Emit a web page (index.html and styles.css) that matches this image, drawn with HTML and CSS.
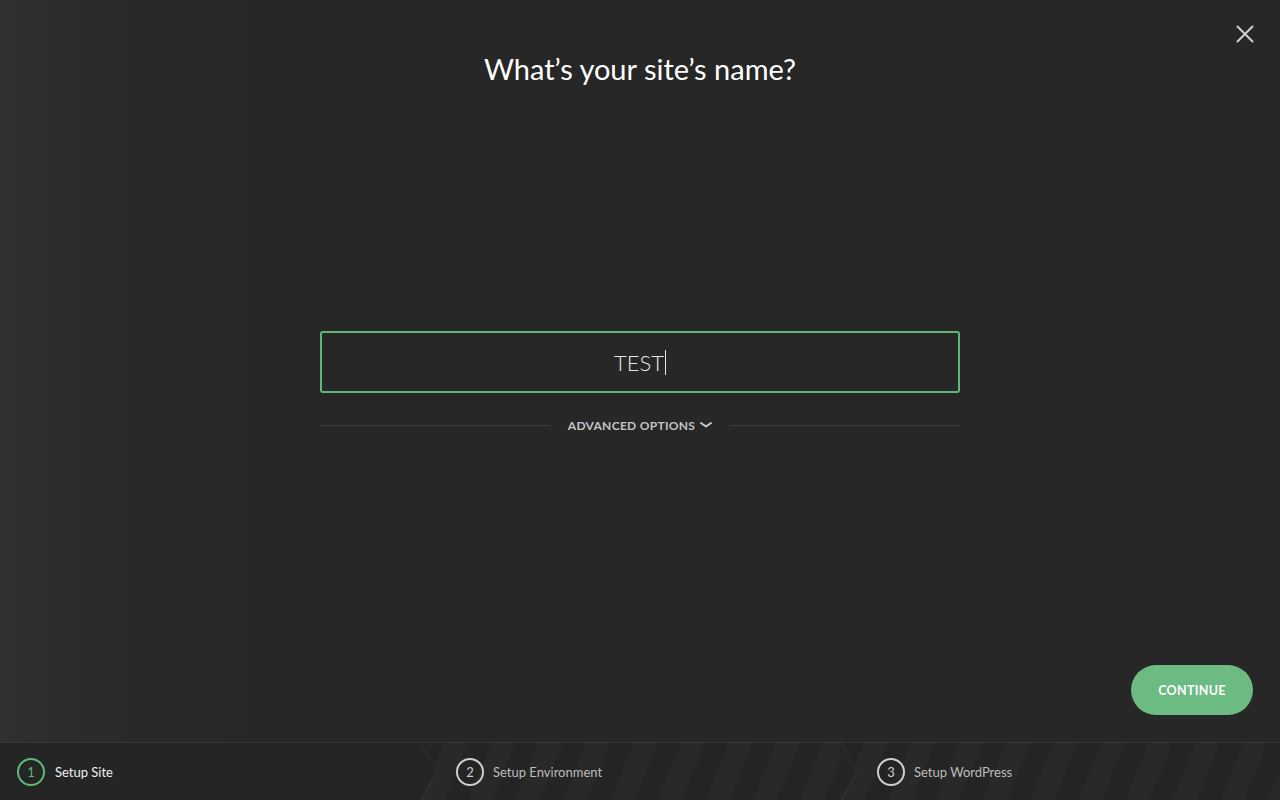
FILE: index.html
```
<!DOCTYPE html>
<html lang="en">
<head>
<meta charset="utf-8">
<title>Create a new site</title>
<link rel="stylesheet" href="styles.css">
</head>
<body>
<div class="screen">
  <header class="topbar">
    <div></div>
    <h1 class="title">What’s your site’s name?</h1>
    <button class="close" aria-label="Close">
      <svg width="18" height="18" viewBox="0 0 18 18"><path d="M1.5 1.5L16.5 16.5M16.5 1.5L1.5 16.5" stroke="#cfcfcf" stroke-width="2" stroke-linecap="round"/></svg>
    </button>
  </header>

  <section class="form">
    <div class="field">
      <span class="value">TEST</span><span class="caret"></span>
    </div>
    <div class="advanced">
      <span class="rule"></span>
      <span class="adv-label">ADVANCED OPTIONS
        <svg width="12" height="8" viewBox="0 0 12 8"><path d="M1 2L6 5.5L11 2" fill="none" stroke="#c8c8c8" stroke-width="2" stroke-linecap="round" stroke-linejoin="round"/></svg>
      </span>
      <span class="rule"></span>
    </div>
  </section>

  <div class="actions">
    <button class="continue">CONTINUE</button>
  </div>
</div>

<footer class="steps">
  <div class="step active">
    <span class="num">1</span><span class="label">Setup Site</span>
  </div>
  <div class="step pending">
    <svg class="chev" width="18" height="58" viewBox="0 0 18 58"><path d="M0.5 0L17 29L0.5 58" fill="none" stroke="#3a3a3a" stroke-width="1"/></svg>
    <span class="num">2</span><span class="label">Setup Environment</span>
  </div>
  <div class="step pending last">
    <svg class="chev" width="18" height="58" viewBox="0 0 18 58"><path d="M0.5 0L17 29L0.5 58" fill="none" stroke="#3a3a3a" stroke-width="1"/></svg>
    <span class="num">3</span><span class="label">Setup WordPress</span>
  </div>
</footer>
</body>
</html>
```

FILE: styles.css
```
* { box-sizing: border-box; }

html, body {
  margin: 0;
  padding: 0;
  width: 1280px;
  height: 800px;
  overflow: hidden;
}

body {
  font-family: Lato, "Open Sans", "Liberation Sans", sans-serif;
  background: linear-gradient(90deg, #303030 0px, #2b2b2b 90px, #282828 180px, #272727 260px);
  color: #f2f2f2;
  display: flex;
  flex-direction: column;
}

.screen {
  height: 742px;
  display: flex;
  flex-direction: column;
}

.topbar {
  display: grid;
  grid-template-columns: 1fr auto 1fr;
  padding: 0 25px;
}

.title {
  margin: 0;
  padding-top: 50px;
  font-size: 29px;
  font-weight: 400;
  line-height: 38px;
  color: #ffffff;
  letter-spacing: 0;
}

.close {
  justify-self: end;
  align-self: start;
  margin-top: 24px;
  background: none;
  border: 0;
  padding: 0;
  width: 20px;
  height: 20px;
  display: flex;
  align-items: center;
  justify-content: center;
  cursor: pointer;
}

.form {
  width: 640px;
  margin: 243px auto 0;
}

.field {
  height: 62px;
  border: 2px solid #5fb878;
  border-radius: 3px;
  display: flex;
  align-items: center;
  justify-content: center;
}

.value {
  font-size: 22px;
  font-weight: 300;
  color: #e6e6e6;
  letter-spacing: 0;
}

.caret {
  display: inline-block;
  width: 1px;
  height: 25px;
  background: #e6e6e6;
  margin-left: 1px;
}

.advanced {
  display: flex;
  align-items: center;
  margin-top: 22px;
  height: 20px;
}

.rule {
  flex: 1;
  height: 1px;
  background: #3c3c3c;
}

.adv-label {
  padding: 0 18px;
  font-size: 12px;
  font-weight: 700;
  letter-spacing: 0.3px;
  color: #c4c4c4;
  display: flex;
  align-items: center;
  gap: 5px;
}

.actions {
  margin-top: auto;
  display: flex;
  justify-content: flex-end;
  padding: 0 27px 27px 0;
}

.continue {
  width: 122px;
  height: 50px;
  border: 0;
  border-radius: 25px;
  background: #6bbb83;
  color: #ffffff;
  font-family: inherit;
  font-size: 12.5px;
  font-weight: 700;
  letter-spacing: 0.3px;
  cursor: pointer;
}

.steps {
  height: 58px;
  border-top: 1px solid #363636;
  background: #252525;
  display: grid;
  grid-template-columns: 420px 420px 440px;
}

.step {
  position: relative;
  display: flex;
  align-items: center;
  gap: 10px;
  padding-left: 17px;
  font-size: 13px;
}

.step.pending {
  padding-left: 36px;
  gap: 9px;
  background: repeating-linear-gradient(112deg, #242424 0px, #242424 22px, #292929 22px, #292929 44px);
  clip-path: polygon(0 0, 100% 0, 100% 100%, 0 100%, 17px 50%);
}

.step.last { padding-left: 37px; }

.chev {
  position: absolute;
  left: 0;
  top: 0;
}

.num {
  width: 28px;
  height: 28px;
  border-radius: 50%;
  border: 2px solid #cfcfcf;
  display: flex;
  align-items: center;
  justify-content: center;
  font-size: 13px;
  color: #cfcfcf;
  flex: none;
}

.label { color: #bdbdbd; }

.step.active .num {
  border-color: #5fb878;
  color: #5fb878;
}

.step.active .label { color: #f0f0f0; }
```
